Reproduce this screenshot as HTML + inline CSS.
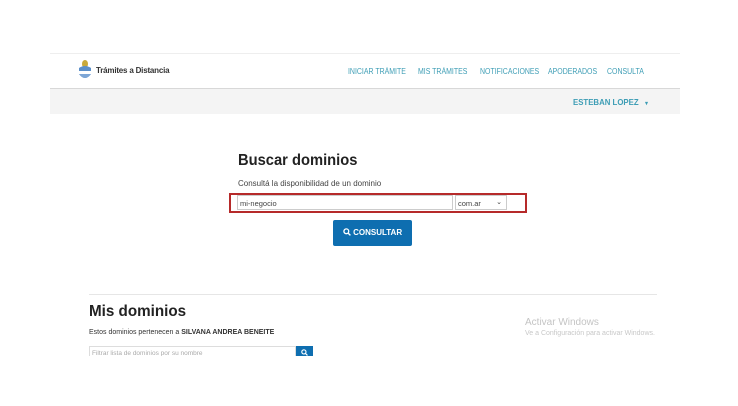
<!DOCTYPE html>
<html><head><meta charset="utf-8"><style>
*{margin:0;padding:0;box-sizing:border-box}
body{width:738px;height:406px;background:#fff;font-family:"Liberation Sans",sans-serif;position:relative;overflow:hidden}
.a{position:absolute;white-space:nowrap}
.nav{color:#3d9db5;font-size:8px;top:67px;transform:scaleX(0.87);transform-origin:left}
</style></head><body>
<div class="a" style="left:50px;top:53px;width:630px;height:1px;background:#eee"></div>
<svg class="a" style="left:78px;top:59px" width="14" height="22" viewBox="0 0 14 22"><ellipse cx="7" cy="5" rx="3" ry="4" fill="#c9a93a"/><path d="M1 9 Q7 5 13 9 L13 15 Q7 23 1 15Z" fill="#5b8fc9"/><rect x="1" y="12" width="12" height="3" fill="#fff"/><path d="M1 15 Q7 23 13 15" fill="#7da6d6"/></svg>
<div class="a" style="left:96px;top:66px;font-size:8px;color:#333;font-weight:bold;letter-spacing:-0.2px">Trámites a Distancia</div>
<div class="a nav" style="left:348px">INICIAR TRÁMITE</div>
<div class="a nav" style="left:418px">MIS TRÁMITES</div>
<div class="a nav" style="left:480px">NOTIFICACIONES</div>
<div class="a nav" style="left:548px">APODERADOS</div>
<div class="a nav" style="left:607px">CONSULTA</div>
<div class="a" style="left:50px;top:88px;width:630px;height:1px;background:#d8d8d8"></div>
<div class="a" style="left:50px;top:89px;width:630px;height:25px;background:#f4f4f4"></div>
<div class="a" style="left:573px;top:97px;font-size:8.5px;font-weight:bold;color:#3d9db5;transform:scaleX(0.92);transform-origin:left">ESTEBAN LOPEZ &nbsp;&nbsp;<span style="font-size:6px">▾</span></div>
<div class="a" style="left:238px;top:152px;font-size:16px;font-weight:bold;color:#222;transform:scaleX(0.92);transform-origin:left">Buscar dominios</div>
<div class="a" style="left:238px;top:179px;font-size:8px;color:#444">Consultá la disponibilidad de un dominio</div>
<div class="a" style="left:229px;top:193px;width:298px;height:20px;border:2px solid #b62a2a"></div>
<div class="a" style="left:237px;top:195px;width:216px;height:15px;border:1px solid #ccc;font-size:7.5px;color:#444;padding:3px 2px">mi-negocio</div>
<div class="a" style="left:455px;top:195px;width:52px;height:15px;border:1px solid #ccc;font-size:7.5px;color:#444;padding:3px 2px">com.ar<span style="position:absolute;right:4px;top:2px;font-size:7px">⌄</span></div>
<div class="a" style="left:333px;top:220px;width:79px;height:26px;background:#0e6eb0;border-radius:2px;color:#fff;font-size:8px;font-weight:bold;text-align:center;line-height:26px"><svg width="8" height="8" viewBox="0 0 8 8" style="vertical-align:-1px"><circle cx="3.3" cy="3.3" r="2.4" stroke="#fff" stroke-width="1.3" fill="none"/><path d="M5 5L7.4 7.4" stroke="#fff" stroke-width="1.4"/></svg> CONSULTAR</div>
<div class="a" style="left:89px;top:294px;width:568px;height:1px;background:#e6e6e6"></div>
<div class="a" style="left:89px;top:303px;font-size:16px;font-weight:bold;color:#222;transform:scaleX(0.95);transform-origin:left">Mis dominios</div>
<div class="a" style="left:89px;top:329px;font-size:7px;color:#333">Estos dominios pertenecen a <b>SILVANA ANDREA BENEITE</b></div>
<div class="a" style="left:89px;top:346px;width:207px;height:12px;border:1px solid #ddd;font-size:6.5px;color:#aaa;padding:3px 2px;overflow:hidden">Filtrar lista de dominios por su nombre</div>
<div class="a" style="left:296px;top:346px;width:17px;height:12px;background:#0e6eb0"><svg width="7" height="7" viewBox="0 0 8 8" style="position:absolute;left:5px;top:3px"><circle cx="3.3" cy="3.3" r="2.4" stroke="#fff" stroke-width="1.3" fill="none"/><path d="M5 5L7.4 7.4" stroke="#fff" stroke-width="1.4"/></svg></div>
<div class="a" style="left:0;top:356px;width:738px;height:50px;background:#fff"></div>
<div class="a" style="left:525px;top:317px;font-size:10px;color:#c4c4c4">Activar Windows</div>
<div class="a" style="left:525px;top:330px;font-size:7px;color:#c8c8c8">Ve a Configuración para activar Windows.</div>
</body></html>
